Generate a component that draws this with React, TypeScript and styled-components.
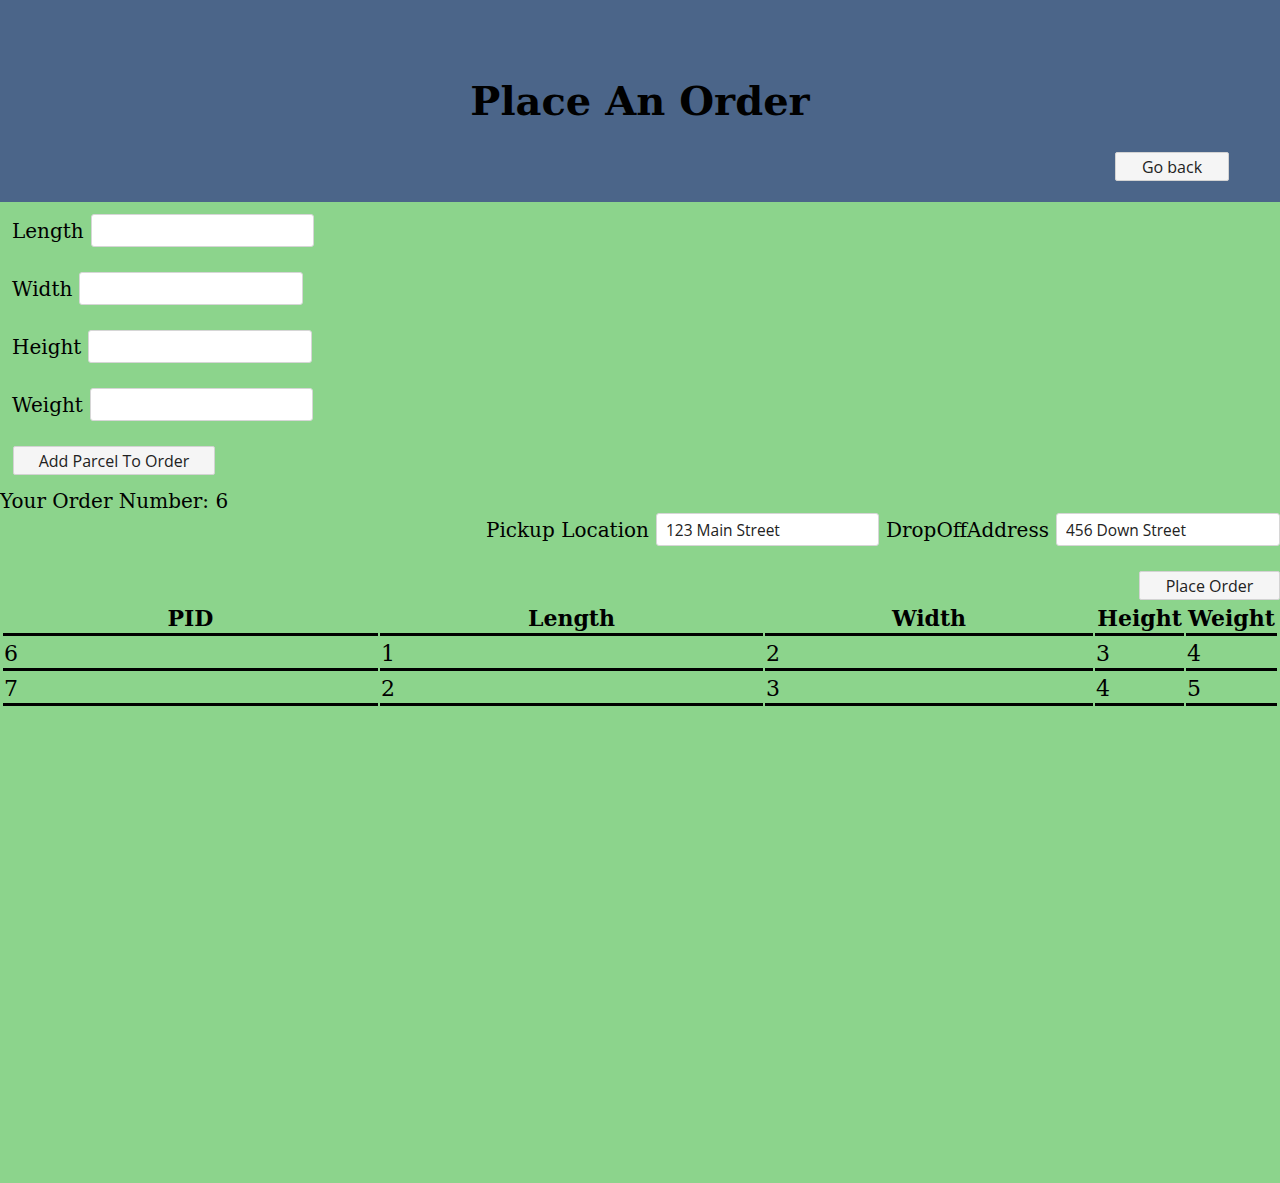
import React from "react";
import styled, { createGlobalStyle } from "styled-components";

const Global = createGlobalStyle`
  html, body { margin: 0; padding: 0; }
  body {
    background: #8cd48c;
    font-family: "DejaVu Serif", serif;
    min-height: 1183px;
  }
`;

const Header = styled.header`
  height: 202px;
  background: #4b6589;
  display: flex;
  flex-direction: column;
`;

const Title = styled.h1`
  margin: 78px 0 0;
  font-size: 40px;
  line-height: 46px;
  font-weight: bold;
  text-align: center;
  color: #000;
`;

const HeaderActions = styled.div`
  margin-top: auto;
  display: flex;
  justify-content: flex-end;
  padding: 0 51px 21px 0;
`;

const Button = styled.button<{ $width: number }>`
  width: ${(p) => p.$width}px;
  height: 29px;
  padding: 0;
  background: #f5f5f5;
  border: 1px solid #d3d3d3;
  border-radius: 2px;
  font-family: "Open Sans", sans-serif;
  font-size: 16px;
  color: #222;
`;

const Form = styled.div`
  display: flex;
  flex-direction: column;
  align-items: flex-start;
  gap: 25px;
  padding: 12px 0 0 12px;
`;

const Field = styled.label`
  display: flex;
  align-items: center;
  gap: 7px;
  font-size: 20px;
  color: #000;
`;

const Input = styled.input<{ $width?: number }>`
  box-sizing: border-box;
  width: ${(p) => p.$width ?? 223}px;
  height: 33px;
  border: 1px solid #d6d6d6;
  border-radius: 3px;
  background: #fff;
  padding: 0 9px;
  font-family: "Open Sans", sans-serif;
  font-size: 15.5px;
  color: #222;
`;

const AddParcel = styled(Button)`
  margin-left: 1px;
`;

const OrderNumber = styled.div`
  margin-top: 15px;
  font-size: 20px;
  line-height: 23px;
  color: #000;
`;

const AddressRow = styled.div`
  display: flex;
  justify-content: flex-end;
  align-items: center;
  gap: 7px;
  font-size: 20px;
`;

const PlaceRow = styled.div`
  display: flex;
  justify-content: flex-end;
  padding-top: 25px;
`;

const Table = styled.table`
  width: 1278px;
  margin: 0 1px;
  border-spacing: 2px;
  table-layout: fixed;
  font-size: 22px;
`;

const Th = styled.th<{ $w: number }>`
  box-sizing: border-box;
  width: ${(p) => p.$w}px;
  padding: 3px 1px 2px;
  border-bottom: 3px solid #000;
  font-weight: bold;
  text-align: center;
  white-space: nowrap;
`;

const Td = styled.td`
  padding: 3px 1px 2px;
  border-bottom: 3px solid #000;
  text-align: left;
`;

const columns = [
  { name: "PID", w: 375 },
  { name: "Length", w: 383 },
  { name: "Width", w: 328 },
  { name: "Height", w: 89 },
  { name: "Weight", w: 91 },
];

const rows = [
  [6, 1, 2, 3, 4],
  [7, 2, 3, 4, 5],
];

export default function App() {
  return (
    <>
      <Global />
      <Header>
        <Title>Place An Order</Title>
        <HeaderActions>
          <Button $width={114}>Go back</Button>
        </HeaderActions>
      </Header>
      <Form>
        <Field>
          Length <Input />
        </Field>
        <Field>
          Width <Input $width={224} />
        </Field>
        <Field>
          Height <Input $width={224} />
        </Field>
        <Field>
          Weight <Input />
        </Field>
        <AddParcel $width={202}>Add Parcel To Order</AddParcel>
      </Form>
      <OrderNumber>Your Order Number: 6</OrderNumber>
      <AddressRow>
        Pickup Location <Input $width={223} defaultValue="123 Main Street" />
        DropOffAddress <Input $width={224} defaultValue="456 Down Street" />
      </AddressRow>
      <PlaceRow>
        <Button $width={141}>Place Order</Button>
      </PlaceRow>
      <Table>
        <thead>
          <tr>
            {columns.map((c) => (
              <Th key={c.name} $w={c.w}>
                {c.name}
              </Th>
            ))}
          </tr>
        </thead>
        <tbody>
          {rows.map((r, i) => (
            <tr key={i}>
              {r.map((v, j) => (
                <Td key={j}>{v}</Td>
              ))}
            </tr>
          ))}
        </tbody>
      </Table>
    </>
  );
}
